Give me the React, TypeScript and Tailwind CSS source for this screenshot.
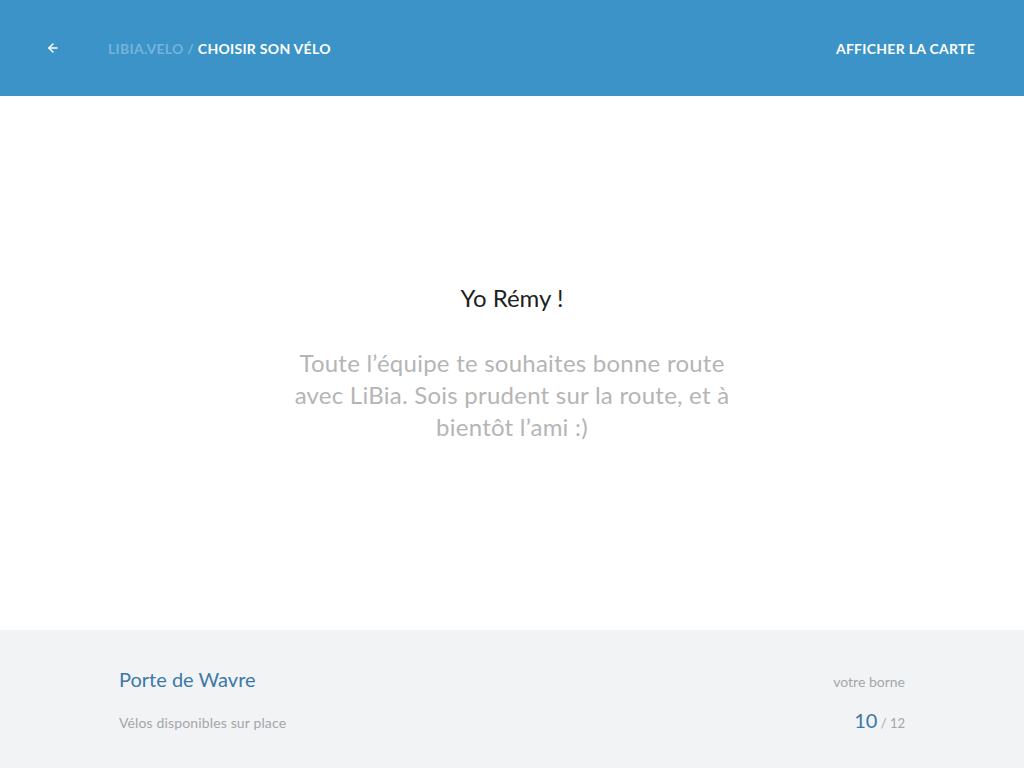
import { ArrowLeft } from 'lucide-react';

export default function App() {
  return (
    <div className="flex h-[768px] w-full flex-col bg-white" style={{ fontFamily: 'Lato, "Open Sans", sans-serif' }}>
      {/* Header */}
      <header className="flex h-[96px] shrink-0 items-center justify-between bg-[#3b93c7] pl-[46px] pr-[49px] text-[14px] font-bold uppercase tracking-[0.02em]">
        <div className="flex items-center">
          <ArrowLeft className="h-[14px] w-[14px] text-white" strokeWidth={2.5} />
          <div className="ml-[48px]">
            <span className="text-[#74b3dc]">LIBIA.VELO</span>
            <span className="text-[#74b3dc]"> / </span>
            <span className="text-white">CHOISIR SON VÉLO</span>
          </div>
        </div>
        <a className="text-white">AFFICHER LA CARTE</a>
      </header>

      {/* Message */}
      <main className="flex flex-1 flex-col items-center justify-center text-center">
        <h1 className="text-[24px] leading-[30px] text-[#1f1f1f]">Yo Rémy !</h1>
        <p className="mt-[34px] text-[24px] leading-[32px] tracking-[0.01em] text-[#b5b5b5]">
          Toute l’équipe te souhaites bonne route
          <br />
          avec LiBia. Sois prudent sur la route, et à
          <br />
          bientôt l’ami :)
        </p>
      </main>

      {/* Footer */}
      <footer className="flex h-[138px] shrink-0 items-start justify-between bg-[#f1f3f5] px-[119px] pt-[36px]">
        <div className="flex flex-col">
          <span className="text-[20px] leading-[26px] text-[#3c78a9]">Porte de Wavre</span>
          <span className="mt-[23px] text-[14px] leading-[16px] tracking-[0.01em] text-[#a3a7ab]">Vélos disponibles sur place</span>
        </div>
        <div className="flex flex-col items-end">
          <span className="mt-[8px] text-[14px] leading-[16px] text-[#a3a7ab]">votre borne</span>
          <span className="mt-[18px] leading-[24px]">
            <span className="text-[20px] text-[#3c78a9]">10</span>
            <span className="text-[13px] text-[#a3a7ab]"> / 12</span>
          </span>
        </div>
      </footer>
    </div>
  );
}
